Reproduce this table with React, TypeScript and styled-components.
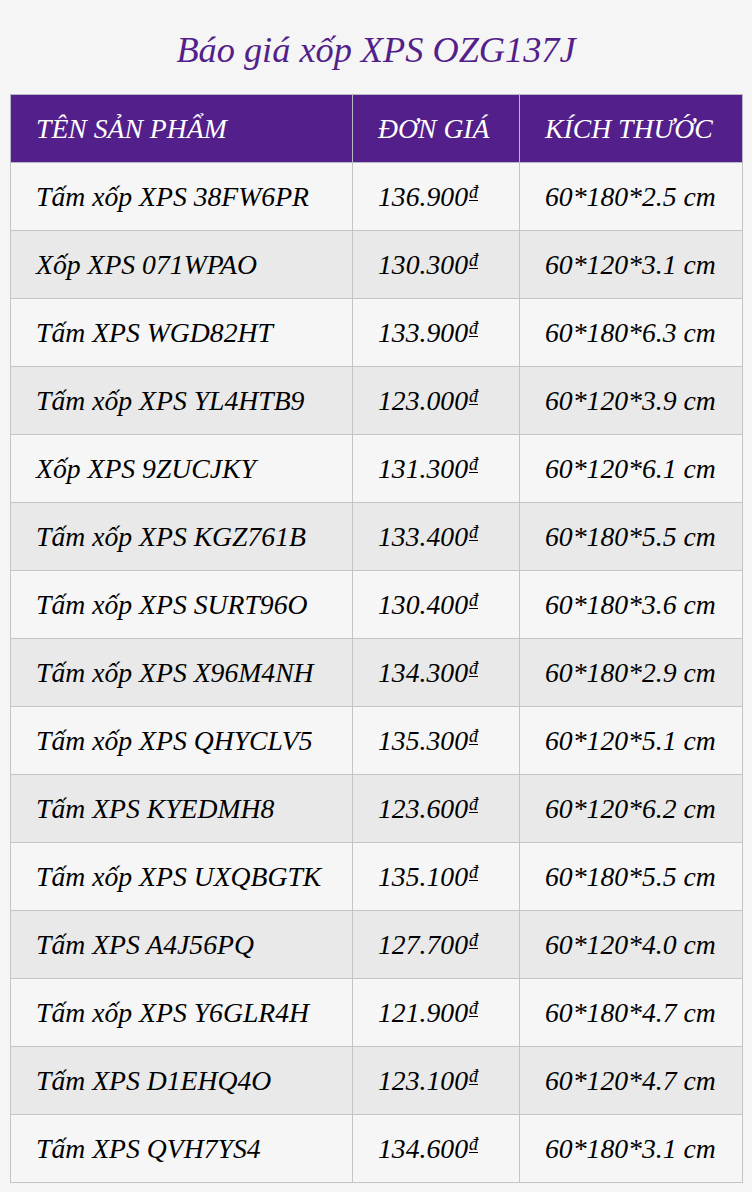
import React from 'react'
import styled, { createGlobalStyle } from 'styled-components'

const GlobalStyle = createGlobalStyle`
  html, body {
    margin: 0;
    padding: 0;
    background: #f5f5f5;
  }
  body {
    font-family: 'Liberation Serif', 'Times New Roman', serif;
  }
`

const Page = styled.main`
  padding: 26px 10px 10px;
`

const Title = styled.h2`
  margin: 0 0 20px;
  text-align: center;
  font-style: italic;
  font-weight: normal;
  font-size: 36.3px;
  line-height: 48px;
  color: #531f8a;
`

const Table = styled.table`
  width: 100%;
  border-collapse: collapse;
  table-layout: fixed;
  font-style: italic;
  font-size: 27.7px;
  color: #000;
`

const HeadCell = styled.th<{ $w: number }>`
  width: ${p => p.$w}px;
  height: 68px;
  padding: 0 25px;
  box-sizing: border-box;
  background: #531f8a;
  color: #fff;
  font-weight: normal;
  text-align: left;
  border: 1px solid #b9b9c4;
`

const Row = styled.tr<{ $alt: boolean }>`
  background: ${p => (p.$alt ? '#e9e9e9' : '#f6f6f6')};
`

const Cell = styled.td`
  height: 68px;
  padding: 0 25px;
  box-sizing: border-box;
  border: 1px solid #c4c4c4;
  white-space: nowrap;
`

const Dong = styled.sup`
  font-size: 18px;
  line-height: 0;
  vertical-align: 8px;
  text-decoration: underline;
  text-underline-offset: 2px;
  margin-left: 1px;
`

const rows: [string, string, string][] = [
  ['Tấm xốp XPS 38FW6PR', '136.900', '60*180*2.5 cm'],
  ['Xốp XPS 071WPAO', '130.300', '60*120*3.1 cm'],
  ['Tấm XPS WGD82HT', '133.900', '60*180*6.3 cm'],
  ['Tấm xốp XPS YL4HTB9', '123.000', '60*120*3.9 cm'],
  ['Xốp XPS 9ZUCJKY', '131.300', '60*120*6.1 cm'],
  ['Tấm xốp XPS KGZ761B', '133.400', '60*180*5.5 cm'],
  ['Tấm xốp XPS SURT96O', '130.400', '60*180*3.6 cm'],
  ['Tấm xốp XPS X96M4NH', '134.300', '60*180*2.9 cm'],
  ['Tấm xốp XPS QHYCLV5', '135.300', '60*120*5.1 cm'],
  ['Tấm XPS KYEDMH8', '123.600', '60*120*6.2 cm'],
  ['Tấm xốp XPS UXQBGTK', '135.100', '60*180*5.5 cm'],
  ['Tấm XPS A4J56PQ', '127.700', '60*120*4.0 cm'],
  ['Tấm xốp XPS Y6GLR4H', '121.900', '60*180*4.7 cm'],
  ['Tấm XPS D1EHQ4O', '123.100', '60*120*4.7 cm'],
  ['Tấm XPS QVH7YS4', '134.600', '60*180*3.1 cm'],
]

const App = () => {
  return (
    <Page>
      <GlobalStyle />
      <Title>Báo giá xốp XPS OZG137J</Title>
      <Table>
        <thead>
          <tr>
            <HeadCell $w={342}>TÊN SẢN PHẨM</HeadCell>
            <HeadCell $w={167}>ĐƠN GIÁ</HeadCell>
            <HeadCell $w={223}>KÍCH THƯỚC</HeadCell>
          </tr>
        </thead>
        <tbody>
          {rows.map(([name, price, size], i) => (
            <Row key={name} $alt={i % 2 === 1}>
              <Cell>{name}</Cell>
              <Cell>
                {price}
                <Dong>đ</Dong>
              </Cell>
              <Cell>{size}</Cell>
            </Row>
          ))}
        </tbody>
      </Table>
    </Page>
  )
}

export default App
